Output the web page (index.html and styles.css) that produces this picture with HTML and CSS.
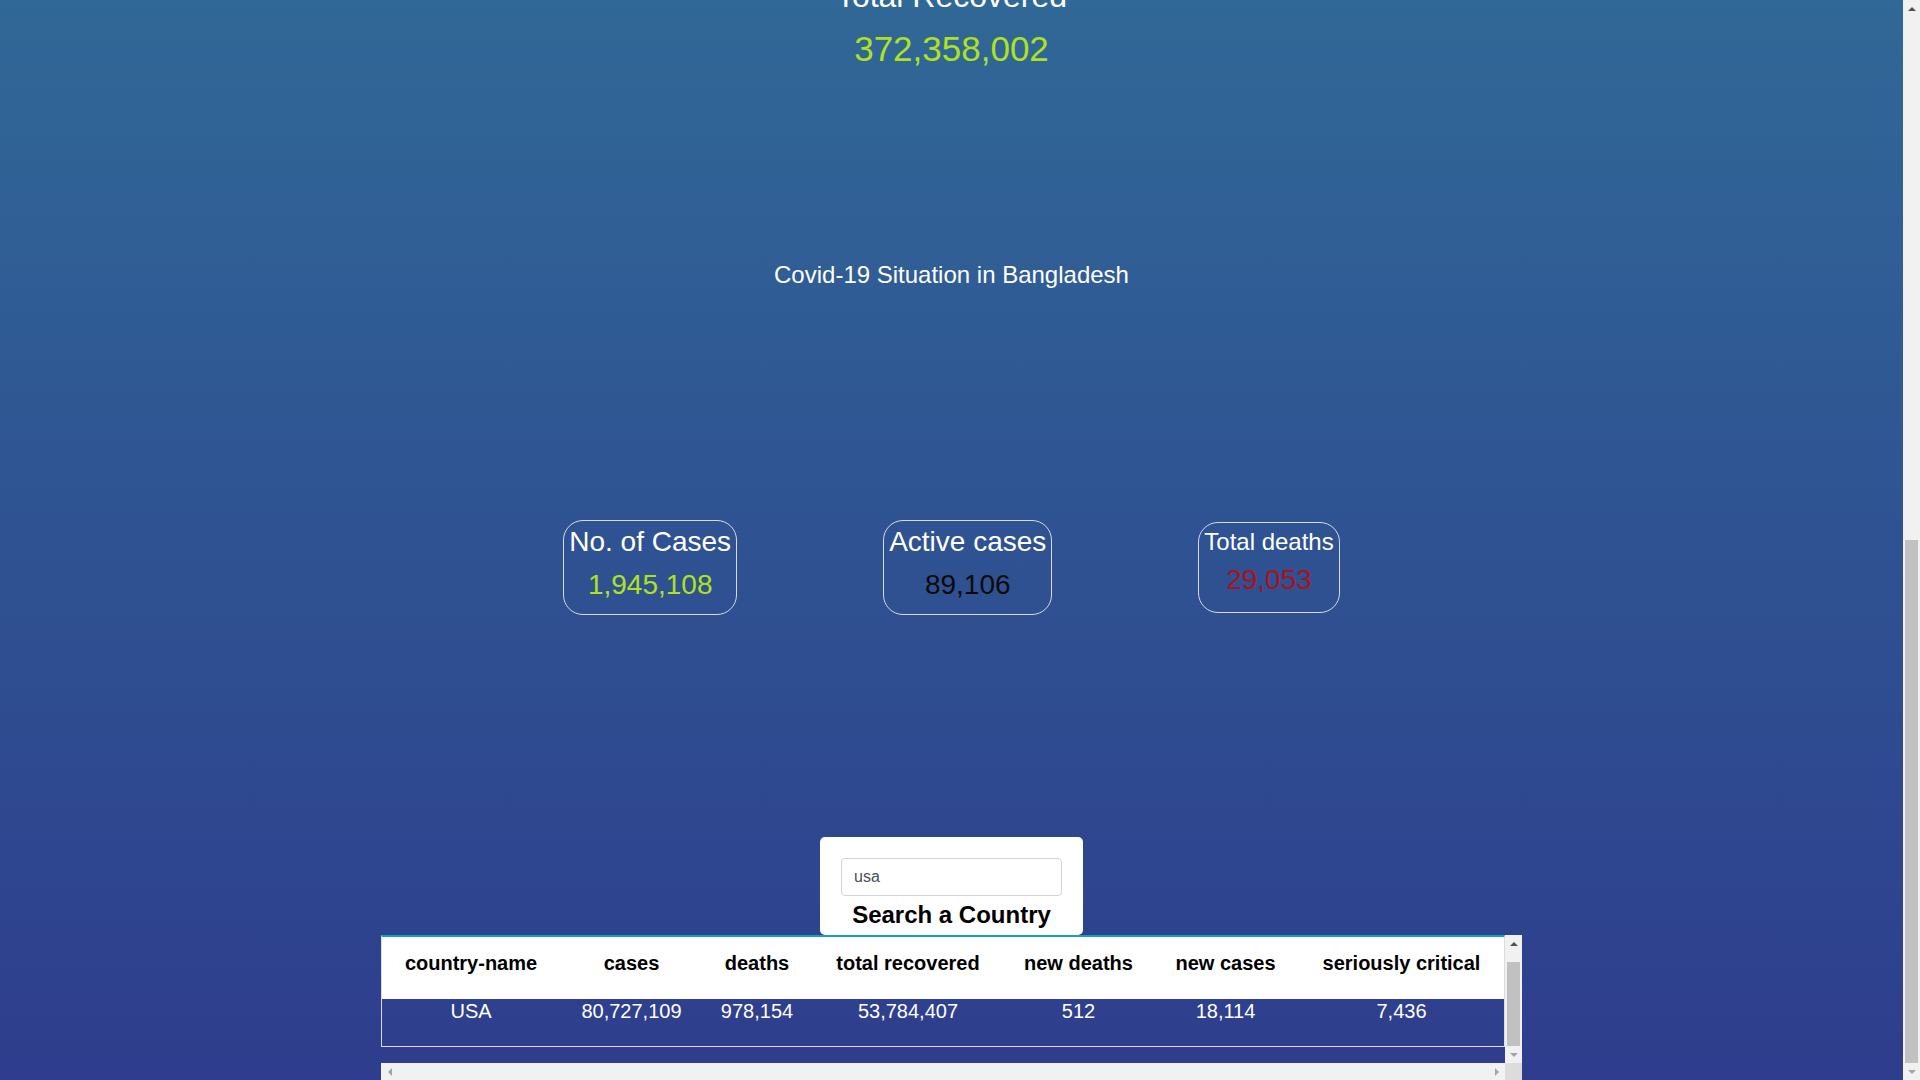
FILE: index.html
```html
<!DOCTYPE html>
<html lang="en">
<head>
<meta charset="utf-8">
<title>Covid-19 Tracker</title>
<link rel="stylesheet" href="styles.css">
</head>
<body>
<div class="window">
  <main class="page">
    <section class="global">
      <div class="stat">
        <h2 class="stat-label">Total Recovered</h2>
        <p class="stat-value">372,358,002</p>
      </div>
    </section>

    <section class="local">
      <h2 class="local-title">Covid-19 Situation in Bangladesh</h2>
      <div class="cards">
        <div class="card">
          <h3 class="card-title">No. of Cases</h3>
          <p class="card-value value-green">1,945,108</p>
        </div>
        <div class="card">
          <h3 class="card-title">Active cases</h3>
          <p class="card-value value-black">89,106</p>
        </div>
        <div class="card card-small">
          <h3 class="card-title">Total deaths</h3>
          <p class="card-value value-red">29,053</p>
        </div>
      </div>
    </section>

    <section class="search">
      <div class="search-box">
        <input class="search-input" type="text" value="usa">
        <h3 class="search-title">Search a Country</h3>
      </div>
      <div class="table-wrap">
        <div class="table-view">
          <table class="country-table">
            <colgroup>
              <col class="col-name">
              <col class="col-cases">
              <col class="col-deaths">
              <col class="col-recovered">
              <col class="col-newdeaths">
              <col class="col-newcases">
              <col class="col-critical">
            </colgroup>
            <thead>
              <tr>
                <th>country-name</th>
                <th>cases</th>
                <th>deaths</th>
                <th>total recovered</th>
                <th>new deaths</th>
                <th>new cases</th>
                <th>seriously critical</th>
              </tr>
            </thead>
            <tbody>
              <tr>
                <td>USA</td>
                <td>80,727,109</td>
                <td>978,154</td>
                <td>53,784,407</td>
                <td>512</td>
                <td>18,114</td>
                <td>7,436</td>
              </tr>
            </tbody>
          </table>
        </div>
        <div class="sbar sbar-v table-vbar">
          <span class="sb-btn"><span class="arrow arrow-up"></span></span>
          <span class="sb-track"><span class="sb-thumb"></span></span>
          <span class="sb-btn"><span class="arrow arrow-down dim"></span></span>
        </div>
        <div class="sbar sbar-h table-hbar">
          <span class="sb-btn"><span class="arrow arrow-left dim"></span></span>
          <span class="sb-track"></span>
          <span class="sb-btn"><span class="arrow arrow-right dim"></span></span>
        </div>
        <div class="sb-corner"></div>
      </div>
    </section>
  </main>

  <div class="sbar sbar-v page-vbar">
    <span class="sb-btn"><span class="arrow arrow-up"></span></span>
    <span class="sb-track"><span class="sb-thumb"></span></span>
    <span class="sb-btn"><span class="arrow arrow-down dim"></span></span>
  </div>
</div>
</body>
</html>
```

FILE: styles.css
```css
html, body {
  margin: 0;
  height: 100%;
}

body {
  font-family: "Liberation Sans", Arial, sans-serif;
  color: #fff;
  background: linear-gradient(to bottom, #306897, #2e3d8d);
}

.window {
  display: flex;
  height: 100vh;
  overflow: hidden;
}

.page {
  flex: 1;
  min-width: 0;
  display: flex;
  flex-direction: column;
  align-items: center;
  text-align: center;
}

/* global total (partly scrolled past) */
.stat {
  margin-top: -21px;
}

.stat-label {
  margin: 0;
  font-size: 32px;
  line-height: 34px;
  font-weight: normal;
}

.stat-value {
  margin: 16px 0 0;
  font-size: 35px;
  line-height: 40px;
  color: #aee21f;
}

/* Bangladesh */
.local {
  display: flex;
  flex-direction: column;
  align-items: center;
}

.local-title {
  margin: 192px 0 0;
  font-size: 24px;
  line-height: 28px;
  font-weight: normal;
}

.cards {
  margin-top: 231px;
  display: flex;
  align-items: center;
  justify-content: center;
  gap: 146px;
}

.card {
  border: 1px solid #d6dbe6;
  border-radius: 20px;
  padding: 5px 5px 13px;
}

.card-title {
  margin: 0;
  font-size: 28px;
  line-height: 32px;
  font-weight: normal;
  white-space: nowrap;
}

.card-small .card-title {
  font-size: 24px;
  line-height: 28px;
}

.card-value {
  margin: 11px 0 0;
  font-size: 28px;
  line-height: 32px;
}

.card-small .card-value {
  margin-top: 8px;
  margin-bottom: 3px;
}

.value-green { color: #aee21f; }
.value-black { color: #0a0a0a; }
.value-red { color: #a8121e; }

/* search */
.search {
  margin-top: 222px;
  display: flex;
  flex-direction: column;
  align-items: center;
}

.search-box {
  background: #fff;
  border-radius: 5px;
  padding: 21px 21px 6px;
  display: flex;
  flex-direction: column;
  align-items: center;
}

.search-input {
  box-sizing: border-box;
  width: 221px;
  height: 38px;
  margin: 0;
  padding: 6px 12px;
  border: 1px solid #ced4da;
  border-radius: 4px;
  font-family: "Liberation Sans", Arial, sans-serif;
  font-size: 16px;
  color: #495057;
  background: #fff;
}

.search-title {
  margin: 5px 0 0;
  font-size: 24px;
  line-height: 28px;
  font-weight: bold;
  color: #000;
}

/* table with its scrollbars */
.table-wrap {
  display: grid;
  grid-template-columns: max-content 17px;
  grid-template-rows: 128px 17px;
}

.table-view {
  overflow: hidden;
}

.country-table {
  table-layout: fixed;
  width: 1124px;
  border-spacing: 0;
  border: 1px solid #d9dce6;
  border-top: 2px solid #17a2b8;
  font-size: 20px;
}

.col-name { width: 178px; }
.col-cases { width: 143px; }
.col-deaths { width: 108px; }
.col-recovered { width: 194px; }
.col-newdeaths { width: 147px; }
.col-newcases { width: 147px; }
.col-critical { width: 205px; }

.country-table th {
  background: #fff;
  color: #000;
  font-weight: bold;
  line-height: 23px;
  padding: 15px 0 24px;
  white-space: nowrap;
}

.country-table td {
  color: #fff;
  line-height: 23px;
  padding: 1px 0 23px;
  white-space: nowrap;
}

/* scrollbars */
.sbar {
  background: #f1f1f1;
  display: flex;
}

.sbar-v {
  flex-direction: column;
  width: 17px;
  flex: none;
}

.sbar-h {
  flex-direction: row;
  height: 17px;
}

.sb-btn {
  flex: none;
  width: 17px;
  height: 17px;
  display: flex;
  align-items: center;
  justify-content: center;
}

.sb-track {
  flex: 1;
  display: flex;
  flex-direction: column;
}

.page-vbar .sb-track {
  justify-content: flex-end;
}

.page-vbar .sb-thumb {
  height: 523px;
}

.table-vbar .sb-thumb {
  margin-top: 10px;
  height: 84px;
}

.sb-thumb {
  margin-left: 2px;
  margin-right: 2px;
  background: #c1c1c1;
}

.sb-corner {
  background: #dcdcdc;
}

.arrow {
  width: 0;
  height: 0;
  border: 4px solid transparent;
  --arrow: #505050;
}

.arrow.dim {
  --arrow: #a3a3a3;
}

.arrow-up {
  border-top-width: 0;
  border-bottom-color: var(--arrow);
}

.arrow-down {
  border-bottom-width: 0;
  border-top-color: var(--arrow);
}

.arrow-left {
  border-left-width: 0;
  border-right-color: var(--arrow);
}

.arrow-right {
  border-right-width: 0;
  border-left-color: var(--arrow);
}
```
